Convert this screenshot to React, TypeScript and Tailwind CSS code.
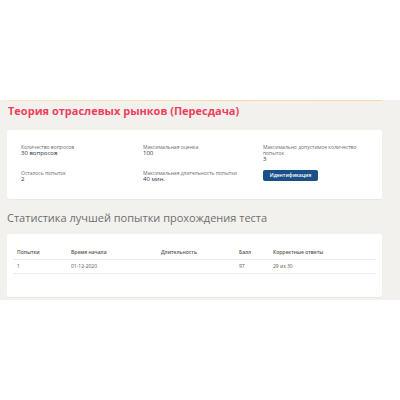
import { type ReactNode } from 'react';

function Field({ label, value }: { label: ReactNode; value: string }) {
  return (
    <div className="leading-[6px]">
      <div className="text-[5px] text-[#6b6b6b]">{label}</div>
      <div className="text-[6px] leading-[7px] font-medium text-[#2c3346]">{value}</div>
    </div>
  );
}

const cols = 'grid grid-cols-[54px_90px_78px_34px_1fr]';

export default function App() {
  return (
    <div className="h-[400px] w-[400px] bg-white" style={{ fontFamily: '"Open Sans", "Noto Sans", sans-serif' }}>
      <div className="h-[100px]" />
      <main className="h-[200px] bg-[#f2f1ee] pl-[7px] pr-[18px]">
        <div className="h-px bg-gradient-to-r from-[#f5e6c0] via-[#f7dfa8] to-[#f7d99a]" />
        <h1 className="pl-px pt-[2px] text-[11px] font-bold leading-[16px] text-[#ef3e5c]">
          Теория отраслевых рынков (Пересдача)
        </h1>
        <section className="mt-[11px] flex h-[69px] flex-col rounded-[2px] bg-white pl-[14px] pt-[14px] shadow-[0_1px_1px_rgba(0,0,0,0.04)]">
          <div className="grid h-[26px] grid-cols-[122px_120px_1fr] items-start">
            <Field label="Количество вопросов" value="30 вопросов" />
            <Field label="Максимальная оценка" value="100" />
            <Field
              label={
                <>
                  Максимально допустимое количество
                  <br />
                  попыток
                </>
              }
              value="3"
            />
          </div>
          <div className="grid grid-cols-[122px_120px_1fr] items-start">
            <Field label="Осталось попыток" value="2" />
            <Field label="Максимальная длительность попытки" value="40 мин." />
            <button className="h-[11px] w-[55px] rounded-[2px] bg-[#1b4f87] text-[5px] font-semibold leading-[11px] text-white">
              Идентификация
            </button>
          </div>
        </section>
        <h2 className="mt-[12px] text-[11px] leading-[14px] text-[#6e6e6e]">
          Статистика лучшей попытки прохождения теста
        </h2>
        <section className="mt-[9px] h-[63px] rounded-[2px] bg-white px-[6px] pt-[15px] shadow-[0_1px_1px_rgba(0,0,0,0.04)]">
          <div className={`${cols} border-b border-[#ececec] pb-[2px] pl-[4px] text-[5px] font-semibold text-[#555]`}>
            <span>Попытки</span>
            <span>Время начала</span>
            <span>Длительность</span>
            <span>Балл</span>
            <span>Корректные ответы</span>
          </div>
          <div className={`${cols} border-b border-[#ececec] py-[3px] pl-[4px] text-[5px] text-[#555]`}>
            <span>1</span>
            <span>01-12-2020</span>
            <span></span>
            <span>97</span>
            <span>29 из 30</span>
          </div>
        </section>
      </main>
    </div>
  );
}
